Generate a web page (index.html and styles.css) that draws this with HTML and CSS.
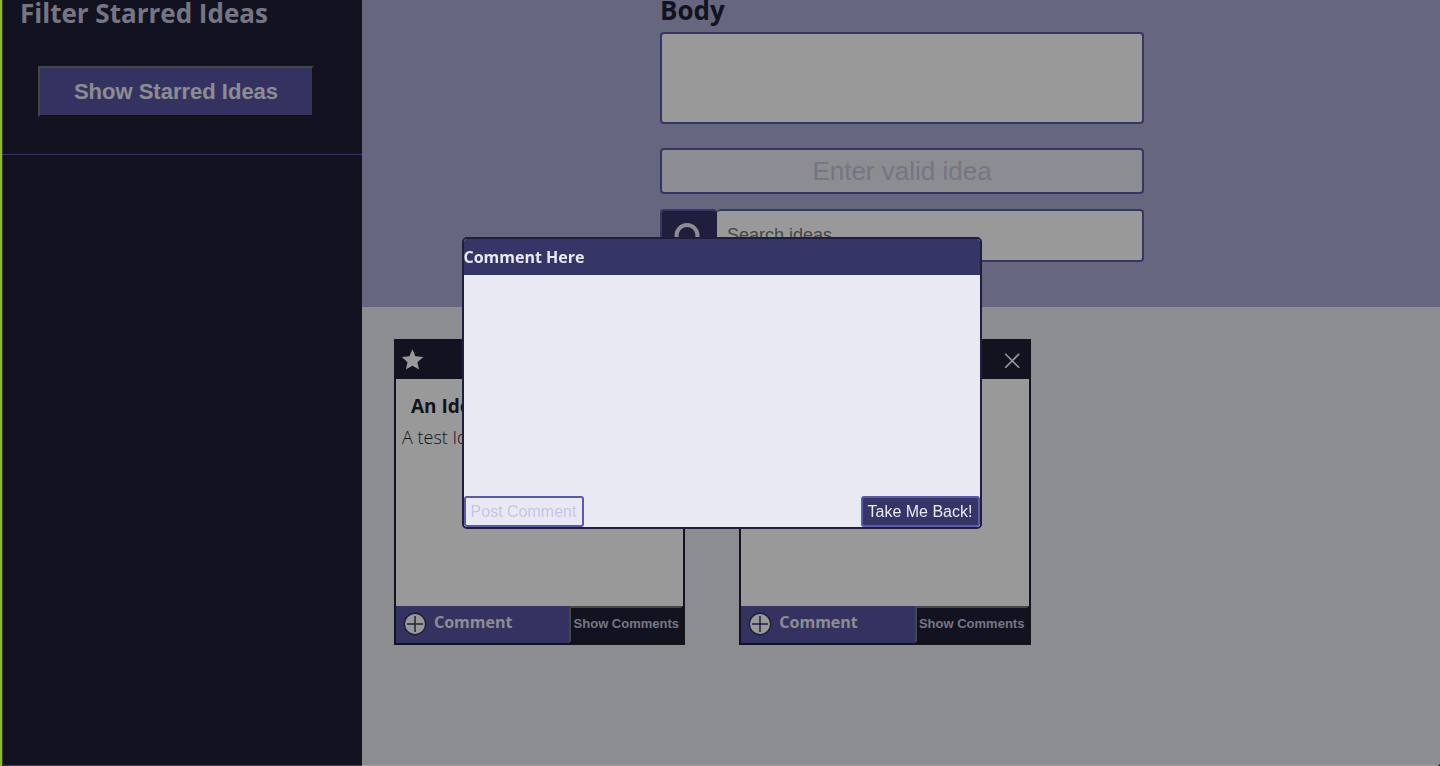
FILE: index.html
```html
<!DOCTYPE html>
<html lang="en">
<head>
<meta charset="utf-8">
<title>IdeaBox</title>
<link rel="stylesheet" href="styles.css">
</head>
<body>
<div class="page">
  <aside class="sidebar">
    <section class="filter">
      <h2 class="filter-title">Filter Starred Ideas</h2>
      <button class="starred-button" type="button">Show Starred Ideas</button>
    </section>
  </aside>
  <main class="content">
    <form class="idea-form">
      <div class="form-column">
        <label class="form-label" for="idea-body">Body</label>
        <textarea class="body-input" id="idea-body"></textarea>
        <button class="save-button" type="button" disabled>Enter valid idea</button>
        <div class="search">
          <button class="search-button" type="button" aria-label="Search">
            <svg class="search-icon" viewBox="0 0 30 30"><circle cx="13" cy="14.5" r="10.5"/><path d="M20 22l7 7"/></svg>
          </button>
          <input class="search-input" type="search" aria-label="Search ideas" placeholder="Search ideas">
        </div>
      </div>
    </form>
    <section class="ideas">
      <article class="card">
        <header class="card-top">
          <button class="icon-button" type="button" aria-label="Star"><svg class="star-icon" viewBox="0 0 22 22"><path d="M10.4 0.3L13.4 7.2L21.3 8L15.4 13.2L17.1 20.5L10.4 16.7L3.8 20.5L5.5 13.2L-0.2 8L7.4 7.2Z"/></svg></button>
          <button class="icon-button" type="button" aria-label="Delete"><svg class="close-icon" viewBox="0 0 22 22"><path d="M4.2 4.8l14 14M18.2 4.8L4.2 18.8"/></svg></button>
        </header>
        <div class="card-body">
          <h3 class="card-title">An Idea</h3>
          <p class="card-text">A test Idea</p>
        </div>
        <footer class="card-bottom">
          <button class="comment-button" type="button"><svg class="plus-icon" viewBox="0 0 24 24"><circle cx="12" cy="12" r="10.7"/><path d="M12 4v16M4 12h16"/></svg><span>Comment</span></button>
          <button class="show-button" type="button">Show Comments</button>
        </footer>
      </article>
      <article class="card">
        <header class="card-top">
          <button class="icon-button" type="button" aria-label="Star"><svg class="star-icon" viewBox="0 0 22 22"><path d="M10.4 0.3L13.4 7.2L21.3 8L15.4 13.2L17.1 20.5L10.4 16.7L3.8 20.5L5.5 13.2L-0.2 8L7.4 7.2Z"/></svg></button>
          <button class="icon-button" type="button" aria-label="Delete"><svg class="close-icon" viewBox="0 0 22 22"><path d="M4.2 4.8l14 14M18.2 4.8L4.2 18.8"/></svg></button>
        </header>
        <div class="card-body"></div>
        <footer class="card-bottom">
          <button class="comment-button" type="button"><svg class="plus-icon" viewBox="0 0 24 24"><circle cx="12" cy="12" r="10.7"/><path d="M12 4v16M4 12h16"/></svg><span>Comment</span></button>
          <button class="show-button" type="button">Show Comments</button>
        </footer>
      </article>
    </section>
  </main>
</div>
<div class="overlay">
  <div class="modal" role="dialog" aria-labelledby="comment-label">
    <label class="modal-title" id="comment-label" for="comment-text">Comment Here</label>
    <textarea class="modal-text" id="comment-text"></textarea>
    <div class="modal-actions">
      <button class="modal-button modal-post" type="button" disabled>Post Comment</button>
      <button class="modal-button modal-back" type="button">Take Me Back!</button>
    </div>
  </div>
</div>
<div class="window-frame"></div>
<div class="window-edge"></div>
</body>
</html>
```
FILE: styles.css
```css
* { box-sizing: border-box; }
body { margin: 0; font-family: "Open Sans", sans-serif; color: #1f1f37; }
button, input, textarea { margin: 0; font-family: "Liberation Sans", Arial, sans-serif; }
svg { display: block; overflow: visible; }

.page { display: grid; grid-template-columns: 360px 1fr; min-height: 100vh; padding-left: 2px; background: #e9ebf2; }
.sidebar { background: #211f37; }
.filter { padding: 0 18px 37px; border-bottom: 1px solid #5654a2; }
.filter-title { margin: 0 0 40px; font-size: 26px; line-height: 26px; color: #c5c4da; }
.starred-button { display: block; width: 276px; height: 51px; margin: 0 18px; padding: 0; border: 2px outset #767676; background: #5654a0; color: #e9e9f3; font-size: 22px; font-weight: bold; }

.idea-form { display: flex; justify-content: center; padding: 0 0 45px 2px; background: #aaacd2; }
.form-column { display: flex; flex-direction: column; width: 45%; }
.form-label { margin-bottom: 12px; font-size: 26px; font-weight: bold; line-height: 20px; }
.body-input { height: 92px; margin-bottom: 24px; border: 2px solid #5b5ba9; border-radius: 4px; background: #fff; resize: none; }
.save-button { height: 46px; margin-bottom: 15px; padding: 0; border: 2px solid #5b5ba9; border-radius: 4px; background: #e9ebf2; color: #c5c3da; font-size: 26px; }
.search { display: flex; height: 53px; }
.search-button { display: grid; place-items: center; width: 57px; padding: 0; border: 2px solid #5b5ba9; border-right: 0; border-radius: 4px; background: #353567; }
.search-icon { width: 30px; height: 30px; fill: none; stroke: #e9e9f3; stroke-width: 4; }
.search-input { flex: 1; min-width: 0; padding: 0 10px; border: 2px solid #5b5ba9; border-left: 0; border-radius: 4px; background: #fff; font-size: 18px; }
.search-input::placeholder { color: #757575; }

.ideas { display: grid; grid-template-columns: repeat(3, minmax(0, 1fr)); gap: 54px; padding: 32px 64px 32px 32px; }
.card { display: flex; flex-direction: column; min-height: 306px; border: 2px solid #211f37; background: #fff; }
.card-top { display: flex; justify-content: space-between; align-items: center; height: 38px; padding: 0 6px; background: #211f37; }
.icon-button { padding: 0; border: 0; background: none; }
.star-icon { width: 22px; height: 22px; fill: #fff; }
.close-icon { width: 22px; height: 22px; fill: none; stroke: #fff; stroke-width: 1.6; }
.card-body { flex: 1; padding: 14px 6px; }
.card-title { margin: 0 9px 4px; font-size: 19px; line-height: 26px; }
.card-text { margin: 0; font-size: 18px; font-weight: 300; line-height: 28px; }
.card-bottom { display: flex; height: 37px; }
.comment-button { display: flex; flex: 1; align-items: center; gap: 7px; padding: 0 7px 1px; border: 0; background: #5654a0; color: #e9e9f3; font: bold 16px/32px "Open Sans", sans-serif; }
.comment-button span { padding-bottom: 4px; }
.plus-icon { width: 24px; height: 24px; fill: #fff; stroke: #353567; stroke-width: 1.5; }
.show-button { width: 114px; padding: 0 0 2px; border: 2px outset #767676; background: #211f37; color: #c5c4da; font-size: 13px; font-weight: bold; white-space: nowrap; }

.overlay { position: fixed; inset: 0 0 0 3px; display: grid; place-items: center; background: rgba(0, 0, 0, 0.4); box-shadow: -1px 0 0 rgba(0, 0, 0, 0.4); }
.modal { display: flex; flex-direction: column; width: 520px; min-height: 292px; overflow: hidden; border: 2px solid #1f1f3d; border-radius: 5px; background: #e9e9f3; }
.modal-title { color: #e9e9f3; background: #353567; font-size: 16px; font-weight: bold; line-height: 36px; }
.modal-text { flex: 1; padding: 4px; border: 0; outline: 0; background: #e9e9f3; resize: none; font-size: 16px; }
.modal-actions { display: flex; justify-content: space-between; }
.modal-button { width: 120px; height: 31px; padding: 0; border: 2px solid #5b5ba9; border-radius: 3px; font-size: 16px; white-space: nowrap; }
.modal-post { background: #e9e9f3; color: #c5c3e3; }
.modal-back { width: 119px; background: #353567; color: #e9e9f3; }

.window-frame { position: fixed; inset: 0 0 0 2px; border: solid rgba(255, 255, 255, 0.18); border-width: 0 0 1px 1px; border-radius: 0 0 4px 4px; box-shadow: 0 0 0 4px #222; pointer-events: none; }
.window-edge { position: fixed; inset: 0 auto 0 0; width: 2px; background: #8cbd22; }
```
